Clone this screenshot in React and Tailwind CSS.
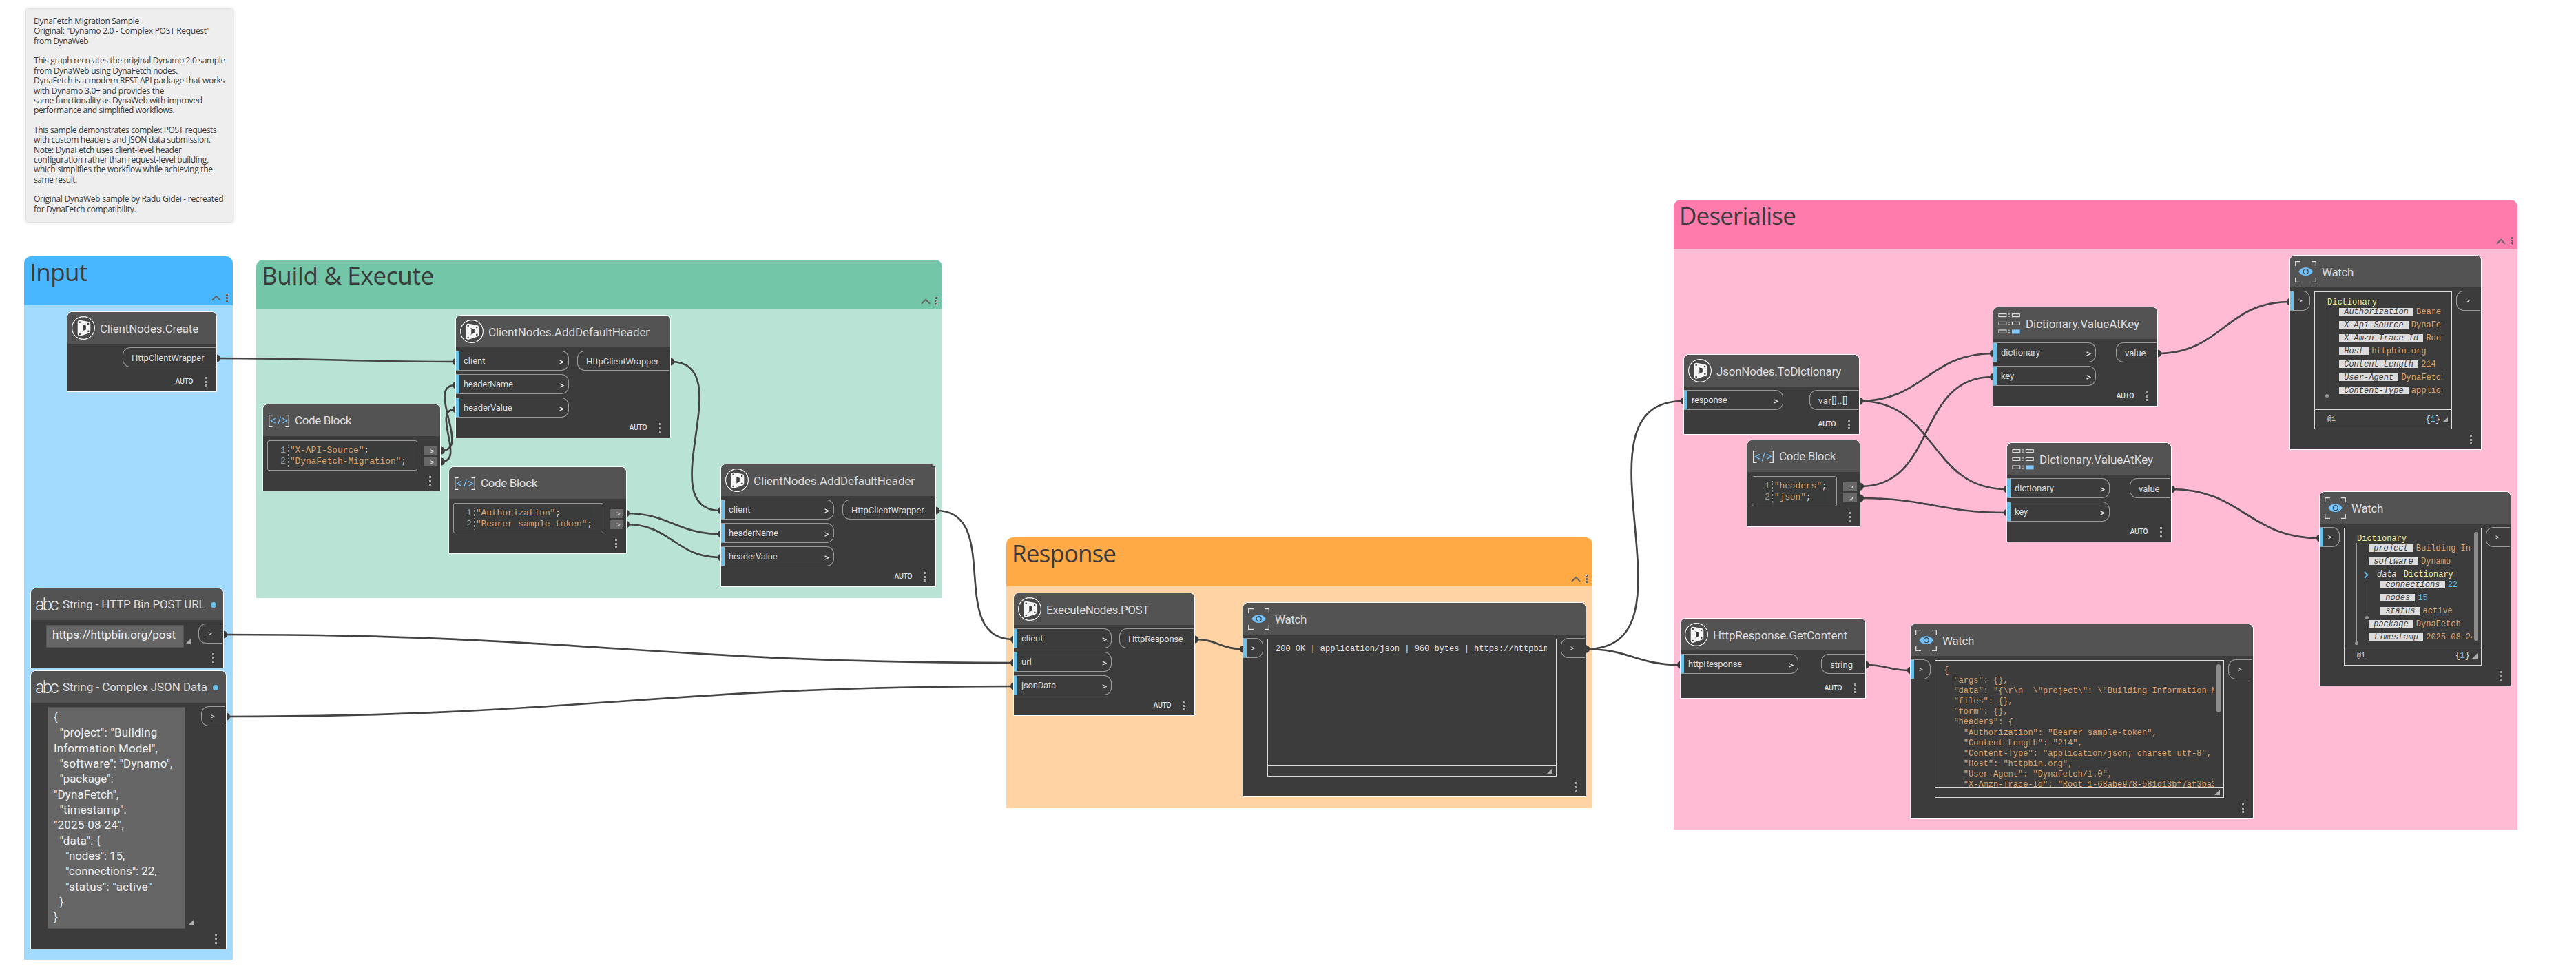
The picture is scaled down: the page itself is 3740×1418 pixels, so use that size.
import { useLayoutEffect, useRef, useState } from "react";

/* Text run whose tracking is tuned so that it spans a given width. */
function Fit({ w, className = "", children }) {
  const ref = useRef(null);
  const [ls, setLs] = useState(0);
  useLayoutEffect(() => {
    const natural = ref.current.getBoundingClientRect().width;
    setLs((w - natural) / String(children).length);
  }, [w, children]);
  return (
    <span ref={ref} className={"inline-block whitespace-pre " + className} style={{ letterSpacing: ls + "px" }}>
      {children}
    </span>
  );
}

/* ---------- icons ---------- */

function DynamoIcon() {
  return (
    <svg width="34" height="34" viewBox="0 0 34 34" className="shrink-0">
      <circle cx="17" cy="17" r="16.4" fill="#484848" stroke="#fff" strokeWidth="1.1" />
      <path d="M11.7 8.7 L24.3 11 L24.3 21.7 L11.7 26 Z" fill="#f5f5f5" stroke="#f5f5f5" strokeWidth="6" strokeLinejoin="round" />
      <path d="M16.3 12.4 L20.8 13.4 V19.2 L16.3 21.2 Z" fill="#3c3c3c" />
      <path d="M14.8 11.8 L17 13.4 M14.8 22.4 L17 20.4" stroke="#6b6b6b" strokeWidth=".8" />
      <g fill="#3c3c3c">
        <circle cx="11.7" cy="8.8" r="1.3" />
        <circle cx="24.1" cy="11" r="1.3" />
        <circle cx="24.3" cy="21.7" r="1.3" />
        <circle cx="11.7" cy="26" r="1.3" />
      </g>
    </svg>
  );
}

function CodeIcon() {
  return (
    <svg width="30" height="18" viewBox="0 0 30 18" fill="none" className="shrink-0">
      <path d="M5.5 .7 H.7 V17.3 H5.5 M24.5 .7 H29.3 V17.3 H24.5" stroke="#e6e6e6" strokeWidth="1.3" />
      <path d="M9.6 5.3 L3.6 8.7 L9.6 12.1 M17.4 2.4 L13.2 15.4 M20.4 5.3 L26.4 8.7 L20.4 12.1" stroke="#71c3ff" strokeWidth="1.3" />
    </svg>
  );
}

function WatchIcon() {
  return (
    <svg width="31" height="31" viewBox="0 0 31 31" fill="none" className="shrink-0">
      <path d="M8 .7 H.7 V7 M24 .7 H30.3 V7 M8 30.3 H.7 V24 M24 30.3 H30.3 V24" stroke="#dcdcdc" strokeWidth="1.3" />
      <path d="M5.5 15.2 C9.5 7.4 21.5 7.4 25.8 15.2 C21.5 23 9.5 23 5.5 15.2 Z" fill="#71c3ff" />
      <circle cx="15.7" cy="15.2" r="3.5" stroke="#484848" strokeWidth="1.2" />
    </svg>
  );
}

function DictIcon() {
  return (
    <svg width="32" height="31" viewBox="0 0 32 31" fill="none" className="shrink-0">
      <g stroke="#dcdcdc" strokeWidth="1.2">
        <rect x="1" y="1.6" width="10.8" height="4" />
        <rect x="20.4" y="1.6" width="10.8" height="4" />
        <rect x="1" y="13.4" width="10.8" height="4" />
        <rect x="20.4" y="13.4" width="10.8" height="4" />
        <rect x="1" y="25" width="10.8" height="4.4" />
      </g>
      <rect x="20" y="24.4" width="11.6" height="6" fill="#85c8fb" />
      <g fill="#dcdcdc">
        <rect x="15.4" y="1" width="1.2" height="1.8" /><rect x="15.4" y="4.2" width="1.2" height="1.8" />
        <rect x="15.4" y="12.8" width="1.2" height="1.8" /><rect x="15.4" y="16" width="1.2" height="1.8" />
        <rect x="15.4" y="24.6" width="1.2" height="1.8" /><rect x="15.4" y="27.8" width="1.2" height="1.8" />
      </g>
    </svg>
  );
}

function Grip({ className = "" }) {
  return (
    <svg width="8" height="8" viewBox="0 0 8 8" className={"shrink-0 " + className}>
      <path d="M8 0 V8 H0 Z" fill="#adadad" />
    </svg>
  );
}

function Caret({ s, className = "" }) {
  return (
    <svg width={s} height={s} viewBox="0 0 7 7" fill="none" className={"shrink-0 " + className}>
      <path d="M.6 .8 L6 3.5 L.6 6.2" stroke="#dcdcdc" strokeWidth="1.4" />
    </svg>
  );
}

function Kebab() {
  return (
    <div className="flex flex-col gap-[2.6px]">
      <i className="size-[3px] bg-[#a2a2a2]" />
      <i className="size-[3px] bg-[#a2a2a2]" />
      <i className="size-[3px] bg-[#a2a2a2]" />
    </div>
  );
}

/* ---------- shared node parts ---------- */

function Node({ x, y, w, h, icon, iconGap = "gap-[7px] pl-[6px]", titleClass = "mt-[3px]", title, titleW, dot, auto, children }) {
  return (
    <div
      className="absolute flex flex-col overflow-hidden rounded-t-[8px] border border-white bg-[#3c3c3c]"
      style={{ left: x, top: y, width: w, height: h }}
    >
      <div className={"flex h-[46px] shrink-0 items-center bg-[#535353] text-[17px] text-[#dcdcdc] " + iconGap}>
        {icon}
        <Fit w={titleW} className={titleClass}>{title}</Fit>
        {dot && <i className="size-[8px] rounded-full bg-[#6ac0e7]" />}
      </div>
      {children}
      <div className="mt-auto flex h-[28px] shrink-0 items-center justify-end gap-[18px] pr-[13px]">
        {auto && <Fit w={25.5} className="text-[10.5px] font-medium text-[#e0e0e0]">AUTO</Fit>}
        <Kebab />
      </div>
    </div>
  );
}

function InPort({ w, label, labelW }) {
  return (
    <div
      className="flex h-[29px] items-center rounded-r-[11px] border border-l-0 border-[#999] pr-[6px] text-[13px] text-[#dcdcdc]"
      style={{ width: w }}
    >
      <i className="h-full w-[5px] bg-[#6ac0e7]" />
      {label ? (
        <>
          <Fit w={labelW} className="ml-[6px]">{label}</Fit>
          <Caret s={7} className="mt-[3px] ml-auto" />
        </>
      ) : (
        <Caret s={5.5} className="ml-[7px]" />
      )}
    </div>
  );
}

function OutPort({ w, label, labelW }) {
  return (
    <div
      className="mr-px ml-auto flex h-[29px] items-center rounded-l-[11px] border border-r-0 border-[#999] pl-[12px] text-[13px] text-[#dcdcdc]"
      style={{ width: w }}
    >
      {label ? <Fit w={labelW} className="mt-[2px]">{label}</Fit> : <Caret s={5.5} className="mt-px ml-px" />}
    </div>
  );
}

function FnNode({ icon, ins = [], inW, out, outLabelW, outW, ...rest }) {
  return (
    <Node icon={icon || <DynamoIcon />} auto {...rest}>
      <div className="flex pt-[5px]">
        <div className="flex flex-col gap-[5px]">
          {ins.map(([label, lw]) => <InPort key={label} w={inW} label={label} labelW={lw} />)}
        </div>
        <OutPort w={outW} label={out} labelW={outLabelW} />
      </div>
    </Node>
  );
}

function CodeBlock({ x, y, w, boxW, lines }) {
  return (
    <Node x={x} y={y} w={w} h={127} icon={<CodeIcon />} iconGap="gap-[8px] pl-[8px] pt-[2px]" titleClass="" title="Code Block" titleW={82}>
      <div className="flex pt-[6px] pl-[6px]">
        <div
          className="flex h-[44px] items-center rounded-[3px] border border-[#999] pt-[2px] pl-[18px] font-['Liberation_Mono'] text-[13px] leading-[16.2px]"
          style={{ width: boxW }}
        >
          <div className="flex bg-[#393c3b]">
            <div className="border-r border-dotted border-[#888] pr-[3px] text-[#999]">
              {lines.map((_, i) => <div key={i}>{i + 1}</div>)}
            </div>
            <div className="pl-[2px] text-[#dba26b]">
              {lines.map(([t, lw]) => (
                <div key={t} className="h-[16.2px]">
                  <Fit w={lw}>{t}</Fit><span className="text-[#dcdcdc]">;</span>
                </div>
              ))}
            </div>
          </div>
        </div>
        <div className="mr-[4px] ml-auto flex flex-col gap-[3px] pt-[9px]">
          {lines.map((_, i) => (
            <div key={i} className="flex h-[13px] w-[20px] items-center justify-end bg-[#686868] pr-[5px]"><Caret s={5.5} /></div>
          ))}
        </div>
      </div>
    </Node>
  );
}

function StringNode({ boxClass, gripClass, children, ...rest }) {
  return (
    <Node
      icon={<Fit w={32} className="text-[25px] font-light text-[#e6e6e6]">abc</Fit>}
      iconGap="gap-[8px] pl-[6px] pt-[2px]"
      titleClass=""
      dot
      {...rest}
    >
      <div className="flex items-start pt-[5px]">
        <div className={"border border-[#555] bg-[#666] text-[17px] text-[#eee] " + boxClass}>{children}</div>
        <Grip className={gripClass} />
        <OutPort w={35} />
      </div>
    </Node>
  );
}

function WatchNode({ x, y, w, boxW, footer, scroll, children }) {
  return (
    <Node x={x} y={y} w={w} h={283} icon={<WatchIcon />} iconGap="gap-[8px] pl-[7px]" title="Watch" titleW={46}>
      <div className="flex pt-[5px]">
        <InPort w={29} />
        <div
          className="mt-px ml-[6px] flex h-[200px] flex-col border border-[#dcdcdc] font-['Liberation_Mono'] text-[12px]"
          style={{ width: boxW }}
        >
          <div className="flex min-h-0 flex-1">
            <div className="min-w-0 flex-1 overflow-hidden">{children}</div>
            <div className="flex w-[13px] shrink-0 pt-[5px] pl-[3px]">
              {scroll && <i className="w-[6px] rounded-full bg-[#8c8c8c]" style={{ height: scroll }} />}
            </div>
          </div>
          {footer ? (
            <div className="flex h-[28px] shrink-0 items-center border-t border-[#dcdcdc] pr-[5px] pl-[18px] text-[#dcdcdc]">
              <span className="text-[10px]">@1</span>
              <span className="ml-auto">{"{"}<span className="text-[#6ac0e7]">1</span>{"}"}</span>
              <Grip className="ml-[3px]" />
            </div>
          ) : (
            <div className="flex h-[15px] shrink-0 items-center justify-end border-t border-[#dcdcdc] pr-[5px]"><Grip /></div>
          )}
        </div>
        <OutPort w={35} />
      </div>
    </Node>
  );
}

function Entry({ k, v, num }) {
  return (
    <div className="flex h-[19px] items-start gap-[4px] leading-[13px] whitespace-pre">
      <span className="h-[11px] bg-[#dcdcdc] text-[#3c3c3c] italic">{" " + k + " "}</span>
      <span className={num ? "text-[#5fb4dd]" : "text-[#dba26b]"}>{v}</span>
    </div>
  );
}

/* Vertical guide with an end dot that brackets the children of a dictionary. */
function Branch({ guide, indent, children }) {
  return (
    <div className="flex">
      <div className="flex w-[5px] shrink-0 flex-col items-center" style={{ height: guide }}>
        <i className="w-px flex-1 bg-[#999]" />
        <i className="size-[5px] rounded-full bg-[#999]" />
      </div>
      <div className={indent}>{children}</div>
    </div>
  );
}

function Group({ x, y, w, h, head, body, title, titleW }) {
  return (
    <div
      className={"absolute flex flex-col overflow-hidden rounded-t-[10px] " + body}
      style={{ left: x, top: y, width: w, height: h }}
    >
      <div className={"flex h-[71px] shrink-0 justify-between pl-[8px] text-[#3c3c3c] " + head}>
        <Fit w={titleW} className="font-['Open_Sans'] text-[35px] leading-[46px]">{title}</Fit>
        <div className="flex items-end gap-[7px] pr-[7px] pb-[5px]">
          <svg width="14" height="11" viewBox="0 0 14 11" fill="none"><path d="M1 8.8 L7 2.8 L13 8.8" stroke="#666" strokeWidth="2" /></svg>
          <div className="flex flex-col gap-[1.5px]">
            <i className="size-[3px] border border-[#666]" />
            <i className="size-[3px] border border-[#666]" />
            <i className="size-[3px] border border-[#666]" />
          </div>
        </div>
      </div>
    </div>
  );
}

/* ---------- data ---------- */

const NOTE = [
  ["DynaFetch Migration Sample", 153],
  ['Original: "Dynamo 2.0 - Complex POST Request"', 255.3],
  ["from DynaWeb", 79.3],
  null,
  ["This graph recreates the original Dynamo 2.0 sample", 278],
  ["from DynaWeb using DynaFetch nodes.", 208.7],
  ["DynaFetch is a modern REST API package that works", 277],
  ["with Dynamo 3.0+ and provides the", 189.3],
  ["same functionality as DynaWeb with improved", 244.7],
  ["performance and simplified workflows.", 204.3],
  null,
  ["This sample demonstrates complex POST requests", 265.3],
  ["with custom headers and JSON data submission.", 256.7],
  ["Note: DynaFetch uses client-level header", 214.7],
  ["configuration rather than request-level building,", 253.7],
  ["which simplifies the workflow while achieving the", 259.7],
  ["same result.", 62.7],
  null,
  ["Original DynaWeb sample by Radu Gidei - recreated", 275.3],
  ["for DynaFetch compatibility.", 148.3],
];

const JSON_TEXT = [
  ["{", 6, ""],
  ['"project": "Building', 142, "pl-[8.5px]"],
  ['Information Model",', 151, ""],
  ['"software": "Dynamo",', 164, "pl-[8.5px]"],
  ['"package":', 78, "pl-[8.5px]"],
  ['"DynaFetch",', 94.5, ""],
  ['"timestamp":', 97.3, "pl-[8.5px]"],
  ['"2025-08-24",', 102, ""],
  ['"data": {', 59.5, "pl-[8.5px]"],
  ['"nodes": 15,', 86, "pl-[17px]"],
  ['"connections": 22,', 132.4, "pl-[17px]"],
  ['"status": "active"', 125.7, "pl-[17px]"],
  ["}", 6, "pl-[8.5px]"],
  ["}", 6, ""],
];

const CONTENT = `{
  "args": {},
  "data": "{\\r\\n  \\"project\\": \\"Building Information Model\\",
  "files": {},
  "form": {},
  "headers": {
    "Authorization": "Bearer sample-token",
    "Content-Length": "214",
    "Content-Type": "application/json; charset=utf-8",
    "Host": "httpbin.org",
    "User-Agent": "DynaFetch/1.0",
    "X-Amzn-Trace-Id": "Root=1-68abe978-581d13bf7af3ba3`;

const WIRES = [
  [315, 520, 661, 525],
  [641, 654, 661, 559],
  [641, 670, 661, 594],
  [974, 525, 1046, 741],
  [909, 745, 1046, 775],
  [909, 761, 1046, 809],
  [1359, 741, 1471, 928],
  [325, 921, 1471, 962],
  [329, 1040, 1471, 996],
  [1735, 928, 1804, 942],
  [2303, 942, 2444, 582],
  [2303, 942, 2439, 965],
  [2700, 582, 2893, 513],
  [2700, 582, 2913, 710],
  [2701, 706, 2893, 547],
  [2701, 723, 2913, 744],
  [3133, 513, 3324, 438],
  [3153, 710, 3367, 781],
  [2709, 965, 2773, 973],
];

function Wires() {
  return (
    <svg className="absolute inset-0" width="3740" height="1418" fill="none">
      {WIRES.map(([x0, y0, x1, y1], i) => {
        const o = 0.45 * Math.hypot(x1 - x0, y1 - y0);
        return (
          <g key={i}>
            <path d={`M${x0} ${y0} C${x0 + o} ${y0} ${x1 - o} ${y1} ${x1} ${y1}`} stroke="#444" strokeWidth="2.7" />
            <circle cx={x0 - 0.5} cy={y0} r="5.5" fill="#3c3c3c" />
            <circle cx={x1 + 1.5} cy={y1} r="5.5" fill="#3c3c3c" />
          </g>
        );
      })}
    </svg>
  );
}

const HEADER_INS = [["client", 31.5], ["headerName", 71.5], ["headerValue", 70.5]];
const DICT_INS = [["dictionary", 57], ["key", 19]];

export default function App() {
  return (
    <div className="relative h-[1418px] w-[3740px] overflow-hidden bg-white font-['Roboto']">
      <div className="absolute top-[13px] left-[38px] h-[309px] w-[300px] rounded-[3px] bg-[#eee] pt-[11px] pl-[11px] font-['Open_Sans'] text-[12px] leading-[14.37px] text-[#3a3a3a] shadow-[0_0_4px_rgba(0,0,0,0.3)]">
        {NOTE.map((l, i) => <div key={i} className="h-[14.37px]">{l && <Fit w={l[1]}>{l[0]}</Fit>}</div>)}
      </div>

      <Group x={35} y={372} w={303} h={1021} head="bg-[#48b7ff]" body="bg-[#a3daff]" title="Input" titleW={84} />
      <Group x={372} y={377} w={996} h={491} head="bg-[#73c7a8]" body="bg-[#b8e3d5]" title={"Build & Execute"} titleW={250} />
      <Group x={1461} y={780} w={851} h={393} head="bg-[#ffaa45]" body="bg-[#ffd3a3]" title="Response" titleW={151} />
      <Group x={2430} y={290} w={1225} h={914} head="bg-[#ff7bac]" body="bg-[#ffbbd3]" title="Deserialise" titleW={169} />

      <Wires />

      <FnNode x={97} y={452} w={218} h={117} title="ClientNodes.Create" titleW={143} out="HttpClientWrapper" outLabelW={105.5} outW={135} />

      <StringNode
        x={44} y={853} w={281} h={117} title="String - HTTP Bin POST URL" titleW={206.5}
        boxClass="mt-[2px] ml-[22px] h-[33px] w-[200px] pl-[8px] leading-[26px]" gripClass="mt-[22px] ml-[2px]"
      >
        <Fit w={179}>https://httpbin.org/post</Fit>
      </StringNode>

      <StringNode
        x={44} y={973} w={285} h={405} title="String - Complex JSON Data" titleW={210}
        boxClass="mt-px ml-[24px] h-[322px] w-[200px] pt-[3px] pl-[8px] leading-[22.35px]" gripClass="mt-[310px] ml-[4px]"
      >
        {JSON_TEXT.map(([t, w, pad], i) => <div key={i} className={"h-[22.35px] " + pad}><Fit w={w}>{t}</Fit></div>)}
      </StringNode>

      <FnNode x={661} y={457} w={313} h={179} title="ClientNodes.AddDefaultHeader" titleW={234} ins={HEADER_INS} inW={164} out="HttpClientWrapper" outLabelW={105.5} outW={134} />
      <CodeBlock x={381} y={586} w={259} boxW={218} lines={[['"X-API-Source"', 107.5], ['"DynaFetch-Migration"', 161.5]]} />
      <CodeBlock x={651} y={677} w={259} boxW={218} lines={[['"Authorization"', 115.5], ['"Bearer sample-token"', 161.5]]} />
      <FnNode x={1046} y={673} w={313} h={179} title="ClientNodes.AddDefaultHeader" titleW={234} ins={HEADER_INS} inW={164} out="HttpClientWrapper" outLabelW={105.5} outW={134} />

      <FnNode x={1471} y={860} w={264} h={179} title="ExecuteNodes.POST" titleW={149} ins={[["client", 31.5], ["url", 15], ["jsonData", 50]]} inW={142} out="HttpResponse" outLabelW={79.5} outW={108} />
      <WatchNode x={1804} y={874} w={499} boxW={420}>
        <div className="overflow-hidden pt-[5px] pl-[11px] whitespace-pre text-[#e6e6e6]">200 OK | application/json | 960 bytes | https://httpbin.org/post</div>
      </WatchNode>

      <FnNode x={2444} y={514} w={256} h={117} title="JsonNodes.ToDictionary" titleW={181} ins={[["response", 51.5]]} inW={144} out="var[]..[]" outLabelW={43} outW={71} />
      <CodeBlock x={2536} y={638} w={165} boxW={124} lines={[['"headers"', 69], ['"json"', 46]]} />
      <FnNode x={2893} y={445} w={240} h={145} icon={<DictIcon />} iconGap="gap-[8px] pl-[7px]" title="Dictionary.ValueAtKey" titleW={165} ins={DICT_INS} inW={149} out="value" outLabelW={30.5} outW={59} />
      <FnNode x={2913} y={642} w={240} h={145} icon={<DictIcon />} iconGap="gap-[8px] pl-[7px]" title="Dictionary.ValueAtKey" titleW={165} ins={DICT_INS} inW={149} out="value" outLabelW={30.5} outW={59} />

      <WatchNode x={3324} y={370} w={279} boxW={200} footer>
        <div className="pt-[8px] pl-[15px]">
          <div className="h-[13px] pl-[3px] leading-[15px] text-[#eff09b]">Dictionary</div>
          <Branch guide={132} indent="pl-[15px] pt-[2px]">
            <Entry k="Authorization" v="Bearer sample-token" />
            <Entry k="X-Api-Source" v="DynaFetch-Migration" />
            <Entry k="X-Amzn-Trace-Id" v="Root=1-68abe978" />
            <Entry k="Host" v="httpbin.org" />
            <Entry k="Content-Length" v="214" />
            <Entry k="User-Agent" v="DynaFetch/1.0" />
            <Entry k="Content-Type" v="application/json" />
          </Branch>
        </div>
      </WatchNode>

      <WatchNode x={3367} y={713} w={279} boxW={200} footer scroll={158}>
        <div className="pt-[8px] pl-[15px]">
          <div className="h-[13px] pl-[3px] leading-[15px] text-[#eff09b]">Dictionary</div>
          <Branch guide={148} indent="pl-[15px] pt-[2px]">
            <Entry k="project" v="Building Information Model" />
            <Entry k="software" v="Dynamo" />
            <div className="-ml-[7px] flex h-[13px] items-center leading-[11px]">
              <svg width="7" height="11" viewBox="0 0 7 11" fill="none"><path d="M1 1 L5.4 5.5 L1 10" stroke="#5fb4dd" strokeWidth="2" /></svg>
              <span className="ml-[12px] text-[#dcdcdc] italic">data</span>
              <span className="ml-[10px] text-[#eff09b]">Dictionary</span>
            </div>
            <div className="-ml-[5px]">
              <Branch guide={58} indent="pl-[17px] pt-[2px]">
                <Entry k="connections" v="22" num />
                <Entry k="nodes" v="15" num />
                <Entry k="status" v="active" />
              </Branch>
            </div>
            <Entry k="package" v="DynaFetch" />
            <Entry k="timestamp" v="2025-08-24" />
          </Branch>
        </div>
      </WatchNode>

      <FnNode x={2439} y={897} w={270} h={117} title="HttpResponse.GetContent" titleW={195} ins={[["httpResponse", 78]]} inW={171} out="string" outLabelW={33} outW={63} />
      <WatchNode x={2773} y={905} w={499} boxW={420} scroll={70}>
        <pre className="pt-[7px] pl-[12px] font-['Liberation_Mono'] leading-[15.1px] text-[#dba26b]">{CONTENT}</pre>
      </WatchNode>
    </div>
  );
}
